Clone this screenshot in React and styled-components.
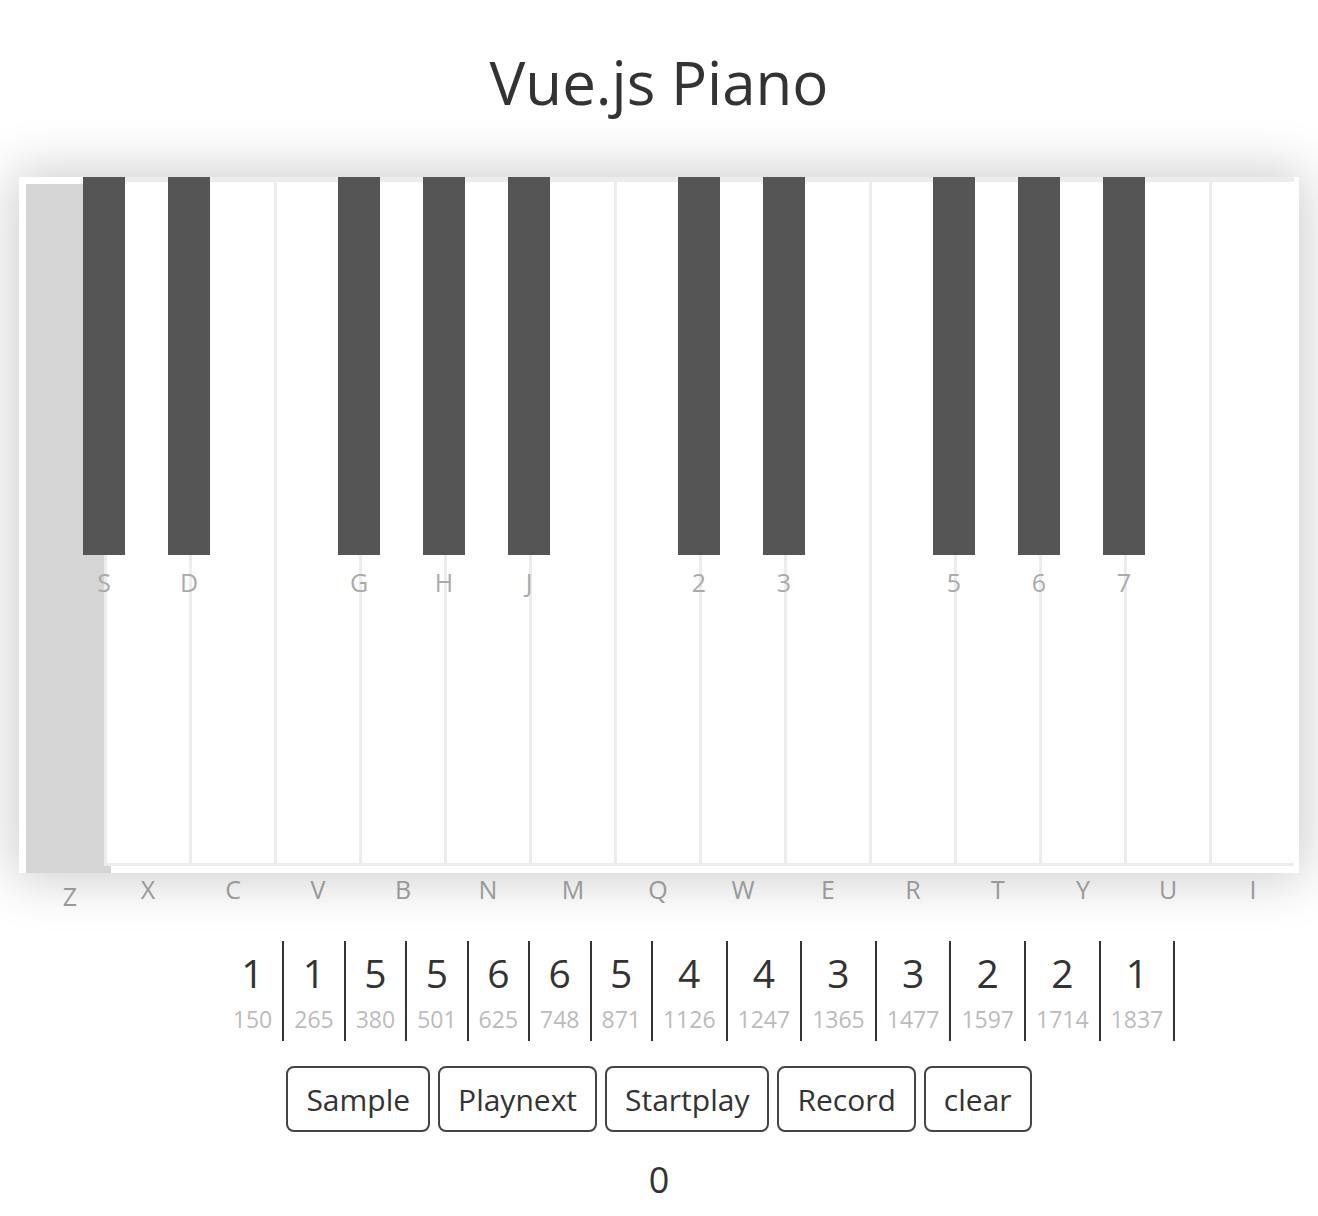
import React from 'react'
import styled, { createGlobalStyle } from 'styled-components'

const GlobalStyle = createGlobalStyle`
body {
  margin: 0;
  background: #fff;
  font-family: "Open Sans", "Noto Sans", sans-serif;
  color: #333;
}
`;

const Page = styled.div`
display: flex;
flex-direction: column;
align-items: center;
`;
const Title = styled.h1`
margin: 46px 0 0 0;
font-size: 60px;
line-height: 72px;
font-weight: 400;
color: #333;
`;
const Keyboard = styled.div`
position: relative;
display: flex;
width: 1280px;
height: 696px;
margin-top: 59px;
padding: 0 5px 7px 0;
box-sizing: border-box;
background: #fff;
box-shadow: 0 0 50px 6px rgba(0,0,0,0.2);
`;
const WhiteKey = styled.div`
position: relative;
flex: 0 0 85px;
height: 100%;
box-sizing: border-box;
border: 3px solid #ececec;
border-top-width: 5px;
border-right: none;
background: ${p => p.$active ? '#d5d5d5' : '#fff'};
border-color: ${p => p.$active ? '#d5d5d5' : '#ececec'};
transform: ${p => p.$active ? 'translate(7px, 7px)' : 'none'};
z-index: ${p => p.$active ? 0 : 1};
&:last-child {
  border-right: 3px solid #ececec;
}
`;
const KeyLabel = styled.span`
position: absolute;
left: 0;
right: 0;
top: calc(100% + 10px);
font-size: 25px;
line-height: 32px;
color: #999;
text-align: center;
`;
const BlackKey = styled.div`
position: absolute;
top: 0;
left: ${p => p.$left}px;
width: 42px;
height: 378px;
background: #555;
z-index: 2;
`;
const BlackLabel = styled.span`
position: absolute;
left: -20px;
right: -20px;
top: 390px;
font-size: 25px;
line-height: 30px;
color: #aaa;
text-align: center;
`;
const NoteList = styled.ul`
display: flex;
justify-content: center;
align-self: stretch;
margin: 68px 0 0 0;
padding: 0 0 0 80px;
list-style: none;
`;
const Note = styled.li`
display: flex;
flex-direction: column;
align-items: center;
height: 100px;
padding: 0 10px;
border-right: 2px solid #333;
`;
const NoteKey = styled.span`
font-size: 39px;
line-height: 64px;
height: 64px;
color: #333;
`;
const NoteTime = styled.span`
font-size: 23px;
line-height: 28px;
color: #bbb;
`;
const Controls = styled.div`
display: flex;
gap: 8px;
margin-top: 25px;
`;
const Button = styled.button`
height: 66px;
padding: 0 18px;
font-family: "Open Sans", "Noto Sans", sans-serif;
font-size: 30px;
color: #333;
background: #fff;
border: 2px solid #444;
border-radius: 8px;
`;
const Counter = styled.div`
margin-top: 24px;
font-size: 36px;
line-height: 48px;
color: #333;
`;

const whites = ['Z', 'X', 'C', 'V', 'B', 'N', 'M', 'Q', 'W', 'E', 'R', 'T', 'Y', 'U', 'I']
const blacks = [
    { label: 'S', after: 0 },
    { label: 'D', after: 1 },
    { label: 'G', after: 3 },
    { label: 'H', after: 4 },
    { label: 'J', after: 5 },
    { label: '2', after: 7 },
    { label: '3', after: 8 },
    { label: '5', after: 10 },
    { label: '6', after: 11 },
    { label: '7', after: 12 },
]
const notes = [
    ['1', 150], ['1', 265], ['5', 380], ['5', 501], ['6', 625], ['6', 748], ['5', 871],
    ['4', 1126], ['4', 1247], ['3', 1365], ['3', 1477], ['2', 1597], ['2', 1714], ['1', 1837],
]
const buttons = ['Sample', 'Playnext', 'Startplay', 'Record', 'clear']

function App() {
    return (
        <Page>
            <GlobalStyle />
            <Title>Vue.js Piano</Title>
            <Keyboard>
                {whites.map((k, i) => (
                    <WhiteKey key={k} $active={i === 0}>
                        <KeyLabel>{k}</KeyLabel>
                    </WhiteKey>
                ))}
                {blacks.map(b => (
                    <BlackKey key={b.label} $left={(b.after + 1) * 85 - 21}>
                        <BlackLabel>{b.label}</BlackLabel>
                    </BlackKey>
                ))}
            </Keyboard>
            <NoteList>
                {notes.map(([k, t]) => (
                    <Note key={t}>
                        <NoteKey>{k}</NoteKey>
                        <NoteTime>{t}</NoteTime>
                    </Note>
                ))}
            </NoteList>
            <Controls>
                {buttons.map(b => <Button key={b}>{b}</Button>)}
            </Controls>
            <Counter>0</Counter>
        </Page>
    )
}

export default App
